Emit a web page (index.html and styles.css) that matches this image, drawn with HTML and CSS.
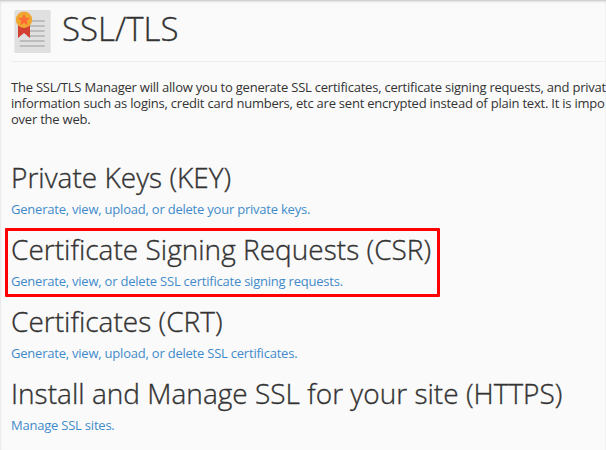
FILE: index.html
```html
<!DOCTYPE html>
<html lang="en">
<head>
<meta charset="utf-8">
<title>SSL/TLS</title>
<link rel="stylesheet" href="styles.css">
</head>
<body>
<main class="page">
<header class="page-header">
<svg class="page-icon" width="37" height="44" viewBox="0 0 37 44" aria-hidden="true">
<rect x=".3" width="36.400" height="43" rx="1.500" fill="#e0e0e0"/>
<path fill="none" stroke="#bdbdbd" stroke-width="2" stroke-linecap="round" d="M14 11h16M14 16h16M14 21h16M14 26h16M6.500 31H30M6.500 36H30"/>
<path fill="#d43f33" d="M4 14h12v14l-6-5-6 5z"/>
<circle cx="10" cy="9.700" r="8.200" fill="#f0a732"/>
<path fill="#ff6b35" d="M10 3.800l1.700 3.900 4.300.4-3.200 2.900.9 4.200-3.700-2.200-3.700 2.200.9-4.200L4 8.100l4.300-.4z"/>
</svg>
<h1 class="title">SSL/TLS</h1>
</header>
<p class="intro">The SSL/TLS Manager will allow you to generate SSL certificates, certificate signing requests, and private<br>information such as logins, credit card numbers, etc are sent encrypted instead of plain text. It is impo<br>over the web.</p>
<section class="item"><h2>Private Keys (KEY)</h2><a>Generate, view, upload, or delete your private keys.</a></section>
<section class="item highlighted"><h2>Certificate Signing Requests (CSR)</h2><a>Generate, view, or delete SSL certificate signing requests.</a></section>
<section class="item"><h2>Certificates (CRT)</h2><a>Generate, view, upload, or delete SSL certificates.</a></section>
<section class="item"><h2>Install and Manage SSL for your site (HTTPS)</h2><a>Manage SSL sites.</a></section>
</main>
</body>
</html>
```
FILE: styles.css
```css
*, *::after { box-sizing: border-box; }
body { margin: 0; background: #fafafa; color: #333; font-family: "Open Sans", sans-serif; font-size: 13px; line-height: 16px; overflow: hidden; }
.page { width: 606px; height: 450px; padding-left: 11px; overflow: hidden; box-shadow: inset 0 1px #d2d2d2, inset 0 2px 2px #ddd, inset 2px 0 2px -1px #eee; }
.page-header { display: flex; height: 62px; padding: 10px 0 0 3px; border-bottom: 1px solid #eee; }
.page-icon { flex: none; }
h1, h2 { margin: 0; font-weight: 300; letter-spacing: .02px; -webkit-text-stroke: .35px #333; }
.title { margin-left: 11px; font-size: 33px; line-height: 37px; }
.intro { margin: 17px 0 31px; white-space: nowrap; letter-spacing: -.22px; }
.item { height: 72px; white-space: nowrap; }
.item h2 { font-size: 28px; line-height: 38px; }
.item a { display: block; color: #428bca; margin-top: 5px; letter-spacing: -.22px; }
.highlighted { position: relative; }
.highlighted::after { content: ""; position: absolute; left: -6px; top: -2px; width: 435px; height: 69px; border: 3px solid #f00; border-radius: 1px; }
```
